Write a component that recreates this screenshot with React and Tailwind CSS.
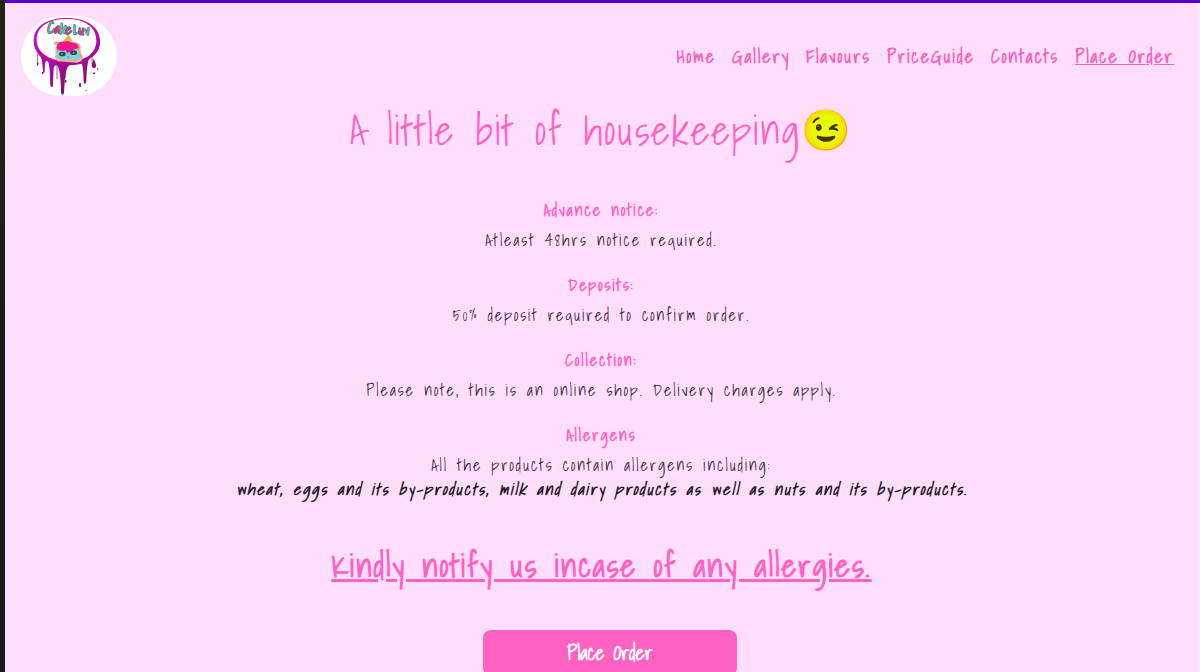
const script = "font-['Shadows_Into_Light','Open_Sans',sans-serif]";

function Logo() {
  return (
    <svg className="h-20 w-24 rounded-full bg-white" viewBox="0 0 288 240" role="img" aria-label="Cake Luv">
      <defs>
        <linearGradient id="ring" x1="0" y1="0" x2="0.3" y2="1">
          <stop offset="0" stopColor="#d414c4" />
          <stop offset="0.55" stopColor="#b50aa9" />
          <stop offset="1" stopColor="#80106d" />
        </linearGradient>
      </defs>
      <path fill="url(#ring)" fillRule="evenodd" d="M38 72C40 29 80 6 137 6s98 25 100 66c2 27-11 44-32 57-6 7-8 40-9 64-1 13-6 14-8 4 0-22-2-45-6-54-9 2-22 4-36 5-11 6-13 30-15 50l-2 33c-2 8-8 6-9-3 0-27-2-59-9-76-4-7-11-5-13 4l-2 51c-1 9-7 7-8 0-1-25-1-53-6-68-4-8-9-4-10 4l-1 24c-1 6-4 5-5-1 0-15 0-31-7-43C46 109 37 91 38 72Zm9-3c-1 35 30 65 90 67 56 1 89-25 89-62 0-43-36-65-89-65-53 0-88 22-90 60Z" />
      <g stroke="#920a82" fill="none" strokeWidth="2">
        <path d="M50 113v30M64 127l3 35M108 140v50M133 140v46M213 115v28" />
      </g>
      <g fill="#920a82">
        <ellipse cx="50" cy="144" rx="2.5" ry="5" /><ellipse cx="65" cy="171" rx="2.5" ry="4" />
        <ellipse cx="134" cy="196" rx="2.5" ry="5" /><ellipse cx="177" cy="207" rx="3" ry="7" />
        <path d="M219 125c-2 10-7 17-7 23s4 9 8 8 6-5 5-10-5-12-6-21Z" />
        <circle cx="219" cy="172" r="3" /><circle cx="230" cy="159" r="2.5" /><circle cx="195" cy="224" r="2" />
      </g>
      <path d="M99 78c7-5 18 3 26-4l15-12 14 14c10 4 22 2 25 14 0 10-2 16 5 28 5 11-2 21-16 22l-57-4c-10-5-9-14-7-22-2-12-1-21 4-27-9 0-13-4-9-9Z" fill="#eab0a0" />
      <path d="M106 79c13 4 20 0 28-8M174 90c-5 15 0 25 7 34" stroke="#c08879" strokeWidth="3" fill="none" />
      <path d="M142 53l-15 24q13 5 28-1Z" fill="#efb057" />
      <path d="M107 95c0-12 8-18 18-17l15-3 16 6c11-1 18 6 16 16-8 2-15 4-19 8l-4 18-10-12-8 6-5-12-15-2-4-7Z" fill="#ed168e" />
      <path d="M107 102l18 3 9-2 4 8 8-3 6 11 1-14 21-4 4 29-68-1Z" fill="#79d5d8" />
      <g fill="#28484f"><ellipse cx="124" cy="114" rx="10" ry="7" /><ellipse cx="158" cy="110" rx="10" ry="7" /></g>
      <g fill="#88979c"><circle cx="123" cy="114" r="3" /><circle cx="158" cy="110" r="3" /></g>
      <path d="M138 122q4 4 8 0" stroke="#a0446c" fill="none" strokeWidth="2" />
      <g fontFamily="Shadows Into Light" fontSize="41" fontWeight="bold" strokeWidth="3" stroke="#4b666a" paintOrder="stroke" strokeLinejoin="round">
        <text y="54" transform="rotate(3 140 50)">
          <tspan x="79" fontSize="47" fill="#69a994">C</tspan><tspan x="101" fill="#e6299b">a</tspan><tspan x="117" fill="#65c9ae">k</tspan><tspan x="133" fill="#a84f8c">e</tspan>
          <tspan x="156" fontSize="45" fill="#5cc7ad">L</tspan><tspan x="173" fill="#d83f9b">u</tspan><tspan x="189" fill="#6dbba6">v</tspan>
        </text>
      </g>
    </svg>
  );
}

const links = ["Home", "Gallery", "Flavours", "PriceGuide", "Contacts"];

const notices = [
  { title: "Advance notice:", body: "Atleast 48hrs notice required." },
  { title: "Deposits:", body: "50% deposit required to confirm order." },
  { title: "Collection:", body: "Please note, this is an online shop. Delivery charges apply." },
  {
    title: "Allergens",
    body: "All the products contain allergens including:",
    detail: "wheat, eggs and its by-products, milk and dairy products as well as nuts and its by-products.",
  },
];

export default function App() {
  return (
    <div className={`flex h-[672px] w-[1200px] overflow-hidden bg-[#ffdefb] tracking-[2px] text-[#ff62c3] ${script}`}>
      <div className="w-[5px] shrink-0 bg-linear-to-b from-[#252514] via-[#1c1918] to-[#191719]" />
      <div className="-mr-[2px] flex min-w-0 flex-1 flex-col border-t-[3px] border-[#5900ce]">
        <header className="flex h-[104px] shrink-0 items-center justify-between pt-[2px] pr-[26px] pl-4">
          <Logo />
          <nav className="flex gap-4 pt-px text-[18px] leading-7 font-bold whitespace-nowrap text-[#f563c0]">
            {links.map((label) => <a key={label} href="#">{label}</a>)}
            <a href="#" className="underline">Place Order</a>
          </nav>
        </header>
        <main className="flex flex-col items-center pr-[2px] whitespace-nowrap">
          <h1 className="h-[88px] pt-px text-[40px] leading-[44px]">A little bit of housekeeping<span className="inline-block -translate-y-px brightness-110 hue-rotate-[8deg] saturate-150">😉</span></h1>
          {notices.map((notice) => (
            <section key={notice.title} className="mb-[21px] flex flex-col items-center text-base leading-6 last-of-type:mb-0">
              <h2 className="mt-[3px] mb-[3px] font-bold">{notice.title}</h2>
              <p className="mt-[3px] -mb-[3px] text-[#302437]">{notice.body}</p>
              {notice.detail && <p className="mt-[3px] ml-px font-bold text-[#251929] italic">{notice.detail}</p>}
            </section>
          ))}
          <h2 className="mt-[40px] text-[32px] leading-[48px] font-bold underline">Kindly notify us incase of any allergies.</h2>
          <button className="mt-[41px] ml-[17px] flex h-[46px] w-[254px] items-center justify-center rounded-lg bg-[#ff62c3] pb-px text-[20px] font-bold tracking-normal text-white">Place Order</button>
        </main>
      </div>
      <div className="mt-[3px] w-[2px] shrink-0 bg-[#f2edf8]" />
    </div>
  );
}
